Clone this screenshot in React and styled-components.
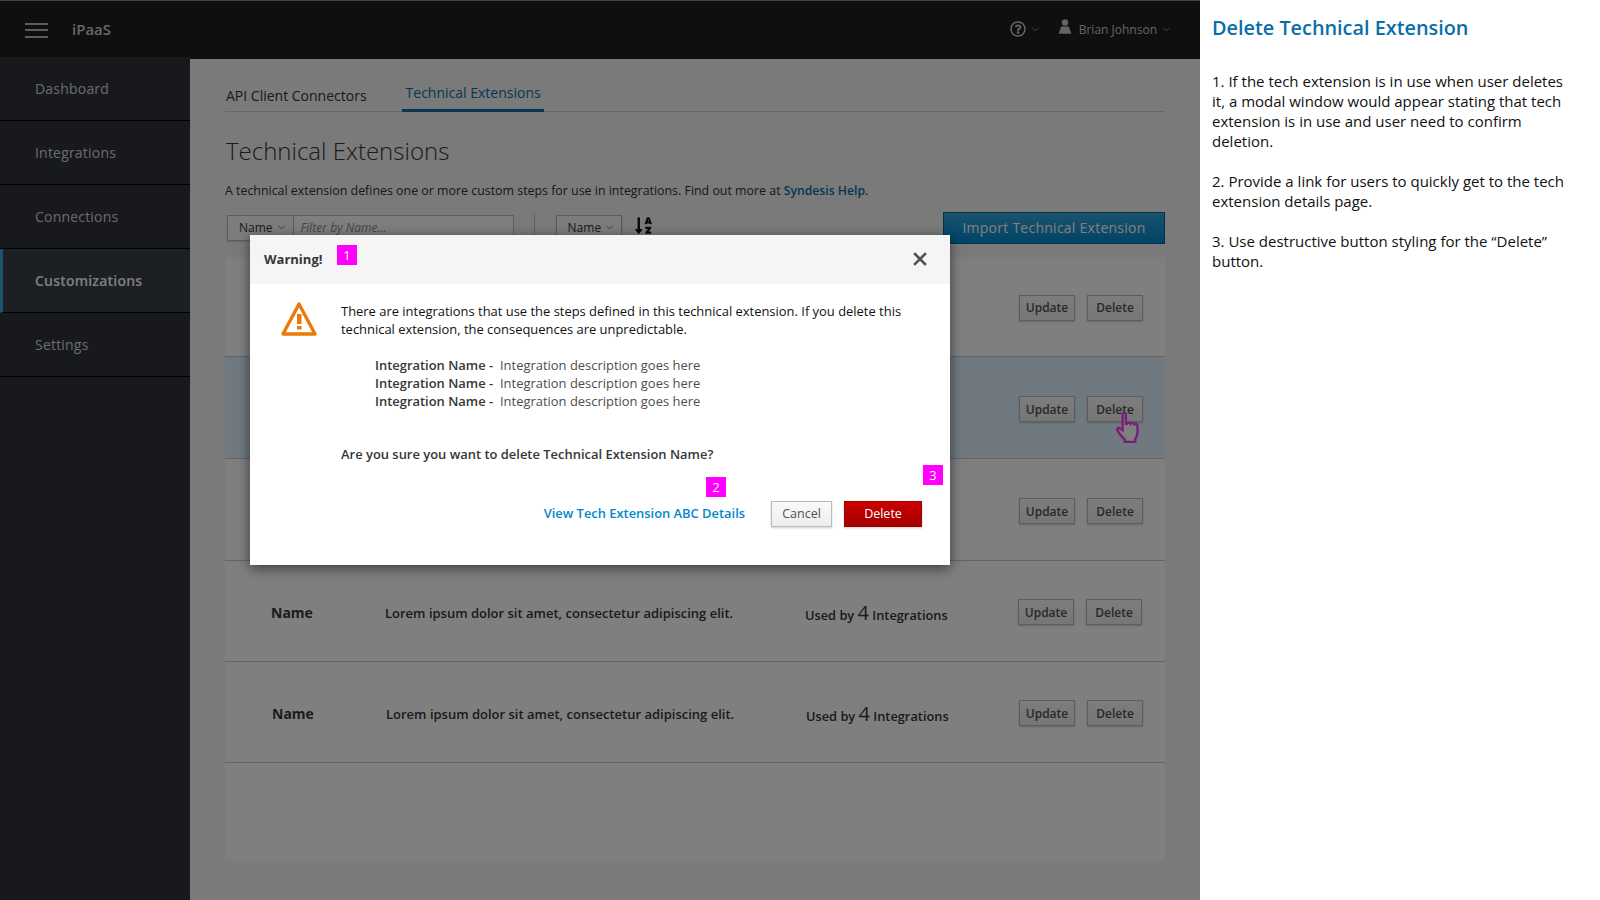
import React from "react";
import styled, { createGlobalStyle } from "styled-components";
import { ChevronDown } from "lucide-react";
import { FaSortAlphaDown, FaRegQuestionCircle } from "react-icons/fa";

const Global = createGlobalStyle`
  html, body { margin: 0; padding: 0; background: #fff; }
  body { font-family: "Open Sans", "Liberation Sans", sans-serif; color: #363636; overflow: hidden; }
  * { box-sizing: border-box; }
`;

const Page = styled.div`
  display: flex;
  width: 1600px;
  height: 900px;
  overflow: hidden;
`;
const AppArea = styled.div`
  position: relative;
  width: 1200px;
  height: 900px;
  display: flex;
  flex-direction: column;
  flex: none;
`;
const TopBar = styled.header`
  height: 57px;
  flex: none;
  display: flex;
  align-items: center;
  background: #1e1e1e;
  border-top: 1px solid #6f8ea0;
  color: #d1d1d1;
  padding: 0 28px 0 25px;
`;
const Hamburger = styled.div`
  width: 23px;
  height: 15px;
  margin-top: 2px;
  border-top: 2px solid #bdbdbd;
  border-bottom: 2px solid #bdbdbd;
  position: relative;
  &::after {
    content: "";
    position: absolute;
    left: 0;
    right: 0;
    top: 4.5px;
    height: 2px;
    background: #bdbdbd;
  }
`;
const Brand = styled.div`
  margin-left: 24px;
  font-size: 15px;
  font-weight: 600;
  color: #cfcfcf;
`;
const TopRight = styled.div`
  margin-left: auto;
  display: flex;
  align-items: center;
  font-size: 12px;
  color: #c8c8c8;
`;
const HelpGroup = styled.div`
  display: flex;
  align-items: center;
  margin-right: 17px;
  gap: 4px;
`;
const UserName = styled.span`
  margin: 0 4px 0 7px;
`;
const Body = styled.div`
  flex: 1;
  display: flex;
  min-height: 0;
`;
const Sidebar = styled.nav`
  width: 190px;
  flex: none;
  background: #2e323b;
`;
const NavItem = styled.div`
  height: 64px;
  display: flex;
  align-items: center;
  padding-left: ${p => (p.$active ? 32 : 35)}px;
  font-size: 14px;
  font-weight: ${p => (p.$active ? 600 : 400)};
  color: ${p => (p.$active ? "#ffffff" : "#d8d8d8")};
  letter-spacing: 0.2px;
  background: ${p => (p.$active ? "#393f47" : "transparent")};
  border-left: ${p => (p.$active ? "3px solid #39a5dc" : "0")};
  border-bottom: 1px solid #030303;
`;
const Main = styled.main`
  flex: 1;
  min-width: 0;
  background: #f5f5f5;
  border-top: 2px solid #1e1e1e;
  padding: 0 35px;
`;
const Tabs = styled.div`
  height: 53px;
  display: flex;
  align-items: flex-end;
  border-bottom: 1px solid #d1d1d1;
  padding-left: 1px;
  gap: 35px;
`;
const Tab = styled.div`
  font-size: 14px;
  padding: 0 ${p => (p.$active ? 3 : 0)}px 6px ${p => (p.$active ? 4 : 0)}px;
  height: ${p => (p.$active ? 29 : 26)}px;
  color: ${p => (p.$active ? "#0a6ea8" : "#363636")};
  border-bottom: ${p => (p.$active ? "3px solid #0a6ea8" : "0")};
  margin-bottom: -1px;
`;
const Title = styled.h1`
  margin: 21px 0 0 1px;
  font-size: 24px;
  line-height: 36px;
  font-weight: 300;
  color: #363636;
`;
const Lead = styled.p`
  margin: 13px 0 0;
  font-size: 12.4px;
  line-height: 18px;
  font-weight: 500;
  color: #2f2f2f;
`;
const HelpLink = styled.a`
  color: #0a6ea8;
  font-size: 12.2px;
  font-weight: 600;
`;
const Toolbar = styled.div`
  display: flex;
  align-items: flex-start;
  height: 45px;
  margin-top: 12px;
  padding-left: 2px;
`;
const SelectBtn = styled.div`
  height: 26px;
  margin-top: 3px;
  margin-left: ${p => p.$left || 0}px;
  padding: 0 6px 2px 11px;
  display: flex;
  align-items: center;
  gap: 3px;
  border: 1px solid #bbb;
  background: #fafafa;
  font-size: 12px;
  font-weight: 500;
  color: #363636;
  box-shadow: 0 1px 2px rgba(0,0,0,.15);
`;
const FilterInput = styled.div`
  width: 220px;
  height: 26px;
  margin-top: 3px;
  padding: 0 0 2px 7px;
  display: flex;
  align-items: center;
  border: 1px solid #bbb;
  border-left: 0;
  background: #fff;
  font-size: 12px;
  font-style: italic;
  color: #8b8b8b;
`;
const ToolDivider = styled.div`
  width: 1px;
  height: 30px;
  background: #c4c4c4;
  margin: 1px 0 0 20px;
`;
const SortIcon = styled.div`
  margin: 4px 0 0 12px;
  color: #111;
  display: flex;
`;
const ImportBtn = styled.button`
  margin-left: auto;
  width: 222px;
  height: 32px;
  padding: 0 0 2px;
  border: 1px solid #00659c;
  background: linear-gradient(#39a5dc, #0088ce);
  font: 500 14px "Open Sans", sans-serif;
  letter-spacing: 0.25px;
  color: #fff;
`;
const Card = styled.section`
  background: #fff;
  height: 604px;
`;
const Row = styled.div`
  position: relative;
  height: ${p => p.$h}px;
  display: grid;
  grid-template-columns: 114px 420px 1fr auto;
  align-items: center;
  padding: ${p => 6 + p.$nudge}px ${p => 22 + p.$dx}px 0 ${p => 47 - p.$dx}px;
  background: ${p => (p.$hover ? "#def3ff" : "#fff")};
  border-bottom: 1px solid #c8c8c8;
`;
const RowName = styled.div`
  font-size: 14px;
  font-weight: 700;
  color: #363636;
  margin-top: -4px;
`;
const RowDesc = styled.div`
  font-size: 13px;
  font-weight: 600;
  color: #363636;
  margin-top: -3px;
`;
const Used = styled.div`
  font-size: 12.8px;
  font-weight: 600;
  color: #363636;
  margin-top: -1px;
`;
const Count = styled.span`
  font-size: 20px;
  font-weight: 500;
  line-height: 1;
`;
const RowActions = styled.div`
  display: flex;
  gap: 12px;
  margin-top: -4px;
`;
const GhostBtn = styled.button`
  position: relative;
  width: 56px;
  height: 26px;
  padding: 0;
  border: 1px solid #bbb;
  background: linear-gradient(#fafafa, #ededed);
  font: 600 12px "Open Sans", sans-serif;
  color: #4d5258;
  box-shadow: 0 1px 2px rgba(0,0,0,.2);
`;
const HandCursor = styled.svg`
  position: absolute;
  left: 27px;
  top: 14px;
`;
const Backdrop = styled.div`
  position: absolute;
  inset: 0;
  background: rgba(0,0,0,.5);
`;
const Modal = styled.div`
  position: absolute;
  left: 250px;
  top: 235px;
  width: 700px;
  height: 330px;
  background: #fff;
  box-shadow: 0 3px 12px rgba(0,0,0,.55);
`;
const ModalHead = styled.div`
  height: 49px;
  display: flex;
  align-items: center;
  padding: 0 23px 2px 14px;
  background: #f5f5f5;
`;
const ModalTitle = styled.div`
  font-size: 13px;
  font-weight: 700;
  color: #363636;
`;
const Close = styled.svg`
  margin-left: auto;
`;
const Badge = styled.div`
  position: absolute;
  left: ${p => p.$x}px;
  top: ${p => p.$y}px;
  width: 20px;
  height: 20px;
  background: #ff00ff;
  color: #fff;
  font-size: 13px;
  line-height: 20px;
  text-align: center;
`;
const ModalBody = styled.div`
  display: flex;
  padding: 18px 27px 0 31px;
`;
const WarnIcon = styled.svg`
  flex: none;
  margin: -1px 24px 0 0;
`;
const ModalText = styled.div`
  flex: 1;
  font-size: 12.95px;
  line-height: 18px;
  color: #111;
`;
const Intro = styled.p`
  margin: 0 0 18px;
`;
const IntegrationRow = styled.div`
  padding-left: 34px;
  display: flex;
  color: #4d4d4d;
`;
const IntegrationName = styled.strong`
  width: 125px;
  font-weight: 600;
  color: #363636;
`;
const Question = styled.p`
  margin: 35px 0 0;
  font-weight: 600;
  color: #363636;
`;
const Actions = styled.div`
  display: flex;
  justify-content: flex-end;
  align-items: center;
  margin: 38px 1px 0 0;
`;
const DetailsLink = styled.a`
  font-size: 12.9px;
  font-weight: 600;
  color: #0088ce;
  margin: -2px 26px 0 0;
`;
const CancelBtn = styled.button`
  width: 61px;
  height: 26px;
  padding: 0 0 2px;
  border: 1px solid #bbb;
  background: linear-gradient(#fafafa, #ededed);
  font: 500 12.5px "Open Sans", sans-serif;
  color: #4d5258;
  box-shadow: 0 1px 2px rgba(0,0,0,.2);
  margin-right: 12px;
`;
const DangerBtn = styled.button`
  width: 78px;
  height: 26px;
  padding: 0 0 2px;
  border: 1px solid #a30000;
  background: linear-gradient(#cc0000, #a30000);
  font: 500 12.5px "Open Sans", sans-serif;
  color: #fff;
  box-shadow: 0 1px 2px rgba(0,0,0,.2);
`;
const Notes = styled.aside`
  flex: 1;
  background: #fff;
  padding: 16px 30px 0 12px;
  color: #111;
`;
const NotesTitle = styled.h2`
  margin: 0 0 31px;
  font-size: 19.85px;
  line-height: 24px;
  font-weight: 600;
  color: #0a6ea8;
`;
const Note = styled.p`
  margin: 0 0 20px;
  font-size: 15px;
  line-height: 20px;
`;

const rows = [
  { h: 100 },
  { h: 102, hover: true, nudge: 1 },
  { h: 102, nudge: 1 },
  { h: 101, dx: 1 },
  { h: 101 },
];
const integrations = [1, 2, 3];

const Chevron = () => <ChevronDown size={11} strokeWidth={1.5} />;

export default function App() {
  return (
    <Page>
      <Global />
      <AppArea>
        <TopBar>
          <Hamburger />
          <Brand>iPaaS</Brand>
          <TopRight>
            <HelpGroup>
              <FaRegQuestionCircle size={16} />
              <Chevron />
            </HelpGroup>
            <svg width="14" height="16" viewBox="0 0 14 16" fill="#c8c8c8" style={{ marginTop: -4 }}>
              <circle cx="7" cy="3.5" r="3.2" />
              <path d="M3.2 7.4h7.6l2.6 7.4H.6z" />
            </svg>
            <UserName>Brian Johnson</UserName>
            <Chevron />
          </TopRight>
        </TopBar>
        <Body>
          <Sidebar>
            <NavItem>Dashboard</NavItem>
            <NavItem>Integrations</NavItem>
            <NavItem>Connections</NavItem>
            <NavItem $active>Customizations</NavItem>
            <NavItem>Settings</NavItem>
          </Sidebar>
          <Main>
            <Tabs>
              <Tab>API Client Connectors</Tab>
              <Tab $active>Technical Extensions</Tab>
            </Tabs>
            <Title>Technical Extensions</Title>
            <Lead>
              A technical extension defines one or more custom steps for use in integrations. Find out more at{" "}
              <HelpLink>Syndesis Help</HelpLink>.
            </Lead>
            <Toolbar>
              <SelectBtn>Name <Chevron /></SelectBtn>
              <FilterInput>Filter by Name...</FilterInput>
              <ToolDivider />
              <SelectBtn $left={21}>Name <Chevron /></SelectBtn>
              <SortIcon><FaSortAlphaDown size={19} /></SortIcon>
              <ImportBtn>Import Technical Extension</ImportBtn>
            </Toolbar>
            <Card>
              {rows.map((r, i) => (
                <Row key={i} $h={r.h} $hover={r.hover} $dx={r.dx || 0} $nudge={r.nudge || 0}>
                  <RowName>Name</RowName>
                  <RowDesc>Lorem ipsum dolor sit amet, consectetur adipiscing elit.</RowDesc>
                  <Used>Used by <Count>4</Count> Integrations</Used>
                  <RowActions>
                    <GhostBtn>Update</GhostBtn>
                    <GhostBtn>
                      Delete
                      {r.hover && (
                        <HandCursor width="28" height="34" viewBox="0 0 26 32">
                          <path
                            d="M7 2c1.500-1 3 0 3 2v8l1 0c1-1.500 3-1.500 3.500 0c1-1.200 3-1 3.500.5c1-1 3-.5 3 1.500v6c0 3-1 4-2 6v3H9v-2c-2-2-6-7-7-9c-.5-2 1-3 2.500-1.500L7 18z"
                            fill="#fff"
                            stroke="#f040f0"
                            strokeWidth="2.200"
                          />
                        </HandCursor>
                      )}
                    </GhostBtn>
                  </RowActions>
                </Row>
              ))}
            </Card>
          </Main>
        </Body>
        <Backdrop />
        <Modal>
          <ModalHead>
            <ModalTitle>Warning!</ModalTitle>
            <Close width="14" height="14" viewBox="0 0 14 14" stroke="#4d5258" strokeWidth="2.6" strokeLinecap="square">
              <path d="M2 2l10 10M12 2L2 12" />
            </Close>
          </ModalHead>
          <ModalBody>
            <WarnIcon width="36" height="36" viewBox="0 0 36 36">
              <path d="M18 3L34 33H2z" fill="none" stroke="#ec7a08" strokeWidth="3.4" strokeLinejoin="round" />
              <rect x="16" y="13" width="4.500" height="10" fill="#ec7a08" />
              <rect x="16" y="25" width="4.500" height="3.500" fill="#ec7a08" />
            </WarnIcon>
            <ModalText>
              <Intro>
                There are integrations that use the steps defined in this technical extension. If you delete this technical extension, the consequences are unpredictable.
              </Intro>
              {integrations.map(n => (
                <IntegrationRow key={n}>
                  <IntegrationName>Integration Name -</IntegrationName>
                  <span>Integration description goes here</span>
                </IntegrationRow>
              ))}
              <Question>Are you sure you want to delete Technical Extension Name?</Question>
              <Actions>
                <DetailsLink>View Tech Extension ABC Details</DetailsLink>
                <CancelBtn>Cancel</CancelBtn>
                <DangerBtn>Delete</DangerBtn>
              </Actions>
            </ModalText>
          </ModalBody>
          <Badge $x={87} $y={10}>1</Badge>
          <Badge $x={456} $y={242}>2</Badge>
          <Badge $x={673} $y={230}>3</Badge>
        </Modal>
      </AppArea>
      <Notes>
        <NotesTitle>Delete Technical Extension</NotesTitle>
        <Note>1. If the tech extension is in use when user deletes it, a modal window would appear stating that tech extension is in use and user need to confirm deletion.</Note>
        <Note>2. Provide a link for users to quickly get to the tech extension details page.</Note>
        <Note>3. Use destructive button styling for the “Delete” button.</Note>
      </Notes>
    </Page>
  );
}
